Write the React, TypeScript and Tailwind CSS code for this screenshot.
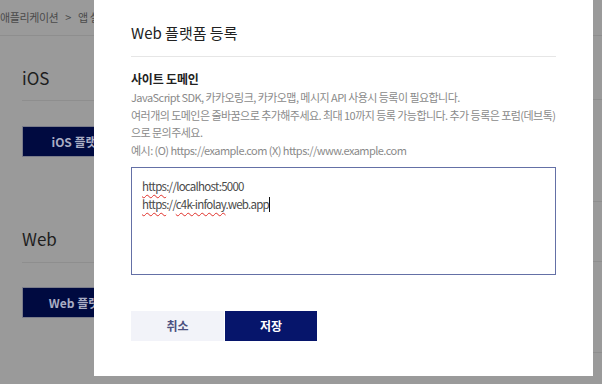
import React from "react";

const font = { fontFamily: '"Noto Sans CJK KR", "Noto Sans", sans-serif' };

function Spell({ children }: { children: React.ReactNode }) {
  return (
    <span className="underline decoration-wavy decoration-[#e0302a] decoration-1 underline-offset-[3px]">
      {children}
    </span>
  );
}

export default function App() {
  return (
    <div
      className="relative w-[602px] h-[384px] overflow-hidden bg-[#9a9a9a] flex"
      style={font}
    >
      {/* background page */}
      <div className="flex-1 flex flex-col">
        <div className="h-[36px] border-b border-[#8e8e8e] flex items-center text-[11px] tracking-[-0.4px] text-[#4a4a4a] whitespace-nowrap">
          <span>애플리케이션</span>
          <span className="mx-[7px]">&gt;</span>
          <span>앱 설정</span>
        </div>
        <div className="px-[22px] flex flex-col">
          <div className="pt-[29px] pb-[10px] border-b border-[#8e8e8e] text-[17px] leading-[25px] text-[#1e1e1e]">
            iOS
          </div>
          <div className="mt-[25px] w-[140px] h-[31px] bg-[#000a40] border border-[#7a7c8a] flex items-center justify-center text-[12px] font-bold text-[#a9adc4] whitespace-nowrap">
            iOS 플랫폼 등록
          </div>
          <div className="mt-[69px] pb-[11px] border-b border-[#8e8e8e] text-[17px] leading-[25px] text-[#1e1e1e]">
            Web
          </div>
          <div className="mt-[24px] w-[140px] h-[31px] bg-[#000a40] border border-[#7a7c8a] flex items-center justify-center text-[12px] font-bold text-[#a9adc4] whitespace-nowrap">
            Web 플랫폼 등록
          </div>
        </div>
      </div>
      <div className="w-[9px] flex flex-col">
        <div className="h-[36px] border-b border-[#8e8e8e]" />
        <div className="h-[64px] border-b border-[#8e8e8e]" />
        <div className="h-[102px] border-b border-[#8e8e8e]" />
        <div className="h-[60px] border-b border-[#8e8e8e]" />
        <div className="h-[91px] border-b border-[#8e8e8e]" />
      </div>

      {/* modal */}
      <div className="absolute left-[94px] top-0 w-[499px] h-[376px] bg-white px-[37px] flex flex-col">
        <div className="pt-[21px] pb-[11px] border-b border-[#e6e6e6] text-[15px] leading-[24px] text-[#222]">
          Web 플랫폼 등록
        </div>
        <div className="mt-[12px] text-[12px] leading-[20px] font-bold text-[#222] tracking-[-0.2px]">
          사이트 도메인
        </div>
        <div className="text-[11px] leading-[17.5px] text-[#8a8a8a] tracking-[-0.55px] whitespace-nowrap">
          <p>JavaScript SDK, 카카오링크, 카카오맵, 메시지 API 사용시 등록이 필요합니다.</p>
          <p>
            여러개의 도메인은 줄바꿈으로 추가해주세요. 최대 10까지 등록 가능합니다. 추가 등록은 포럼(데브톡)
          </p>
          <p>으로 문의주세요.</p>
          <p>예시: (O) https://example.com (X) https://www.example.com</p>
        </div>
        <div className="mt-[8px] h-[108px] border border-[#6470a6] pt-[9px] pl-[10px] text-[11.5px] leading-[18px] text-[#4a4a4a] tracking-[-0.75px]">
          <div>
            <Spell>https</Spell>://localhost:5000
          </div>
          <div className="flex items-center">
            <span>
              <Spell>https</Spell>://<Spell>c4k-infolay</Spell>.web.app
            </span>
            <span className="inline-block w-px h-[15px] bg-[#111]" />
          </div>
        </div>
        <div className="mt-[36px] flex">
          <div className="w-[93px] h-[30px] bg-[#f2f3f9] flex items-center justify-center text-[12px] font-bold text-[#4b5080]">
            취소
          </div>
          <div className="ml-px w-[92px] h-[30px] bg-[#06156b] flex items-center justify-center text-[12px] font-bold text-white">
            저장
          </div>
        </div>
      </div>
    </div>
  );
}
